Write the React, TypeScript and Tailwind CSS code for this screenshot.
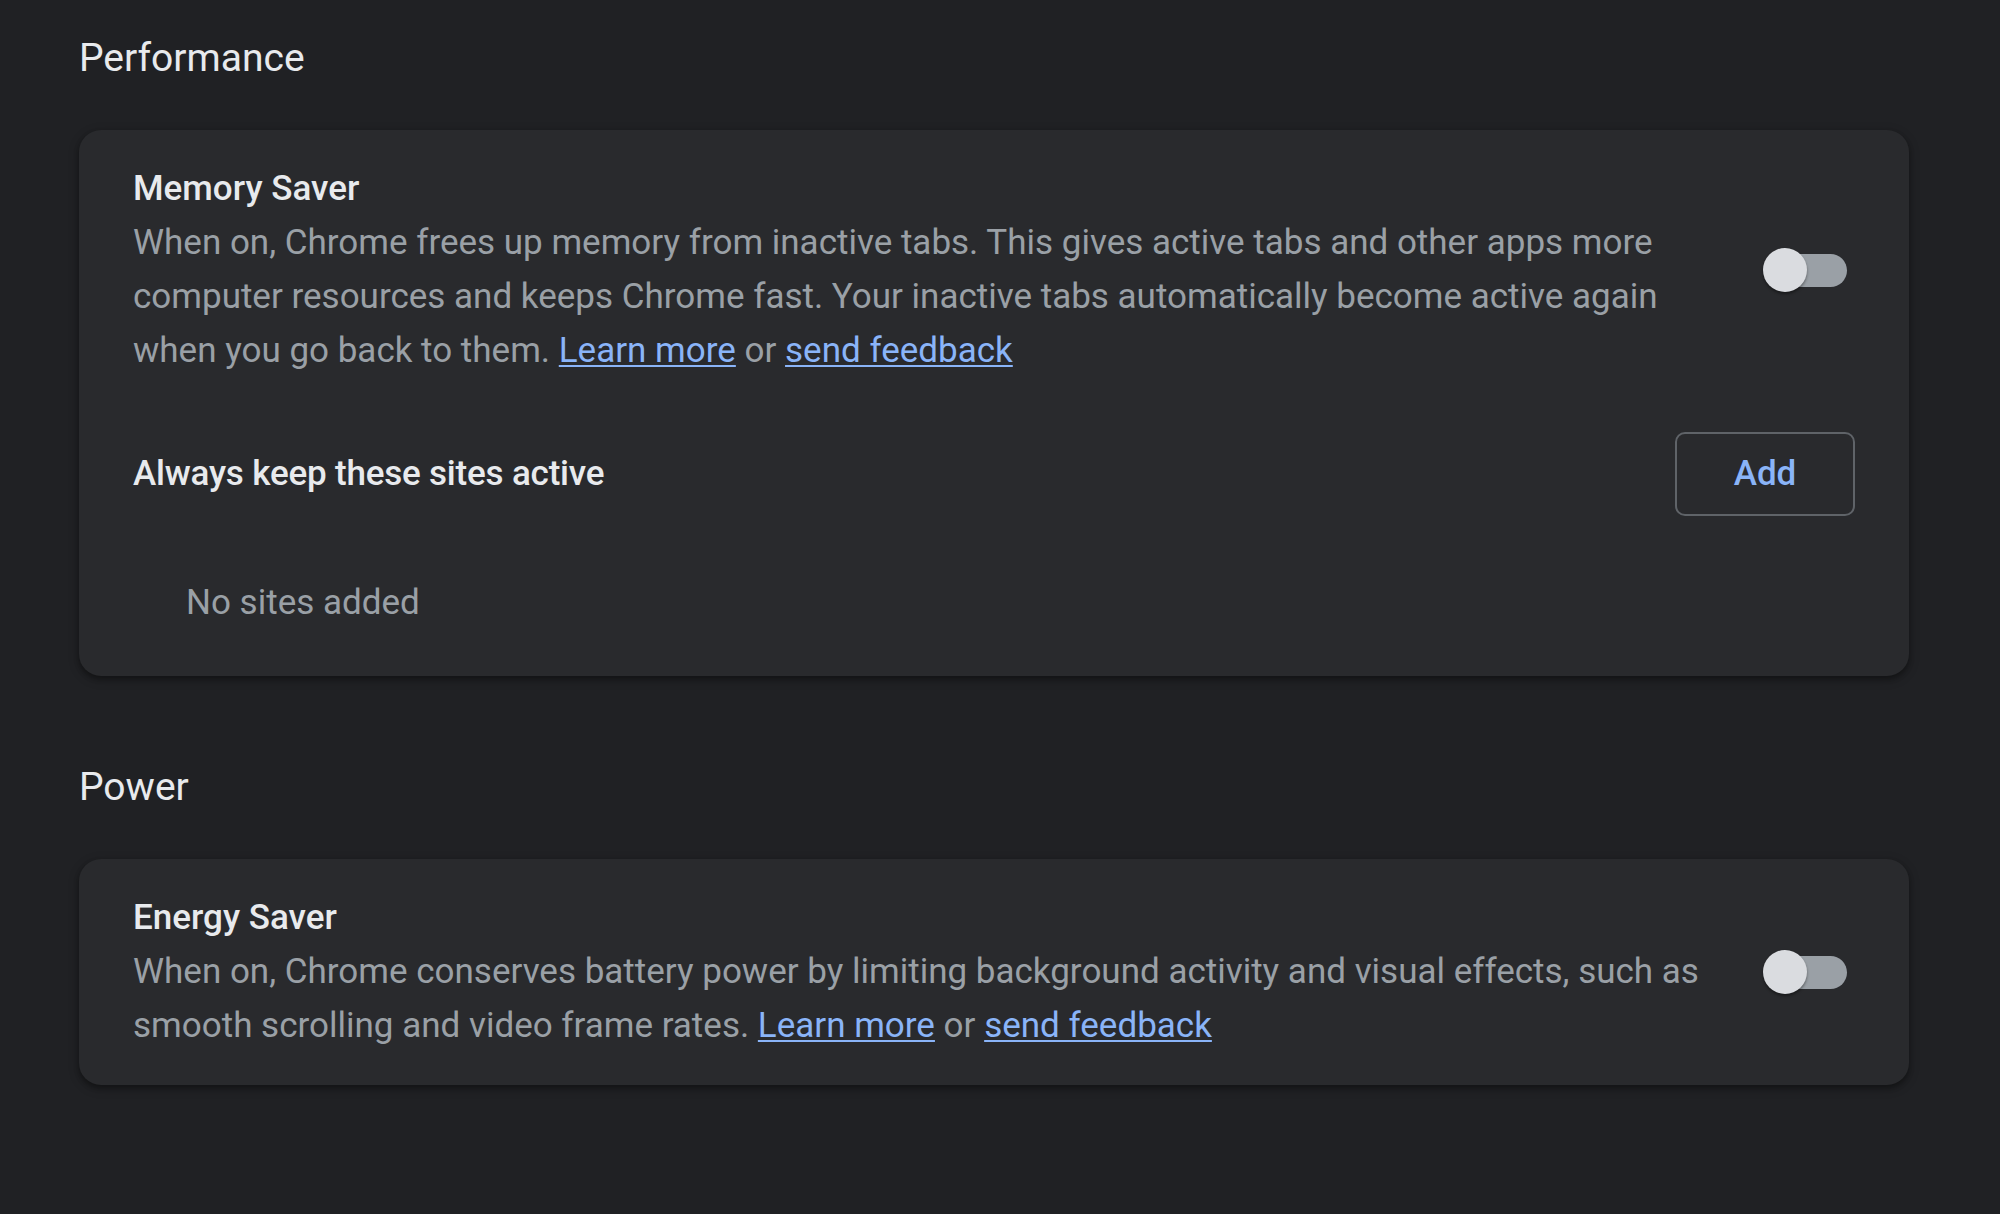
// Chrome settings — Performance / Power page (dark theme), drawn at ~2.7x.

function Toggle() {
  return (
    <div className="relative mr-[8px] h-[44px] w-[84px] shrink-0">
      <div className="absolute left-[6px] right-0 top-[5.5px] h-[33px] rounded-full bg-[#9aa0a6]" />
      <div className="absolute left-0 top-0 h-[44px] w-[44px] rounded-full bg-[#dadce0] shadow-[0_2px_3px_rgba(0,0,0,0.4)]" />
    </div>
  );
}

function Link({ children }: { children: React.ReactNode }) {
  return (
    <a
      href="#"
      className="text-[#8ab4f8] underline decoration-[2px] underline-offset-[3px]"
    >
      {children}
    </a>
  );
}

function Heading({ children }: { children: React.ReactNode }) {
  return (
    <h2 className="text-[39px] font-normal leading-[54px] text-[#e8eaed]">
      {children}
    </h2>
  );
}

const card =
  "rounded-[22px] bg-[#292a2d] px-[54px] shadow-[0_3px_5px_rgba(0,0,0,0.3),0_3px_8px_3px_rgba(0,0,0,0.15)]";

export default function App() {
  return (
    <div className="min-h-screen bg-[#202124] font-['Roboto','Liberation_Sans',sans-serif] text-[35px] leading-[54px]">
      <div className="ml-[79px] w-[1830px] pt-[31px]">
        <Heading>Performance</Heading>

        <section className={`${card} mt-[45px] pt-[32px] pb-[46px]`}>
          <div className="flex items-center">
            <div className="flex-1 pr-[54px]">
              <div className="font-medium text-[#e8eaed]">Memory Saver</div>
              <div className="text-[#9aa0a6]">
                When on, Chrome frees up memory from inactive tabs. This gives
                active tabs and other apps more computer resources and keeps
                Chrome fast. Your inactive tabs automatically become active
                again when you go back to them. <Link>Learn more</Link> or{" "}
                <Link>send feedback</Link>
              </div>
            </div>
            <Toggle />
          </div>

          <div className="mt-[54px] flex items-center justify-between">
            <div className="font-medium tracking-[-0.2px] text-[#e8eaed]">
              Always keep these sites active
            </div>
            <button
              type="button"
              className="h-[84px] w-[180px] rounded-[10px] border-[2px] border-[#5f6368] font-medium text-[#8ab4f8]"
            >
              Add
            </button>
          </div>

          <div className="mt-[60px] pl-[53px] text-[#9aa0a6]">No sites added</div>
        </section>

        <div className="mt-[84px]">
          <Heading>Power</Heading>
        </div>

        <section className={`${card} mt-[45px] pt-[32px] pb-[32px]`}>
          <div className="flex items-center">
            <div className="flex-1 pr-[54px]">
              <div className="font-medium text-[#e8eaed]">Energy Saver</div>
              <div className="text-[#9aa0a6]">
                When on, Chrome conserves battery power by limiting background
                activity and visual effects, such as smooth scrolling and video
                frame rates. <Link>Learn more</Link> or{" "}
                <Link>send feedback</Link>
              </div>
            </div>
            <Toggle />
          </div>
        </section>
      </div>
    </div>
  );
}
